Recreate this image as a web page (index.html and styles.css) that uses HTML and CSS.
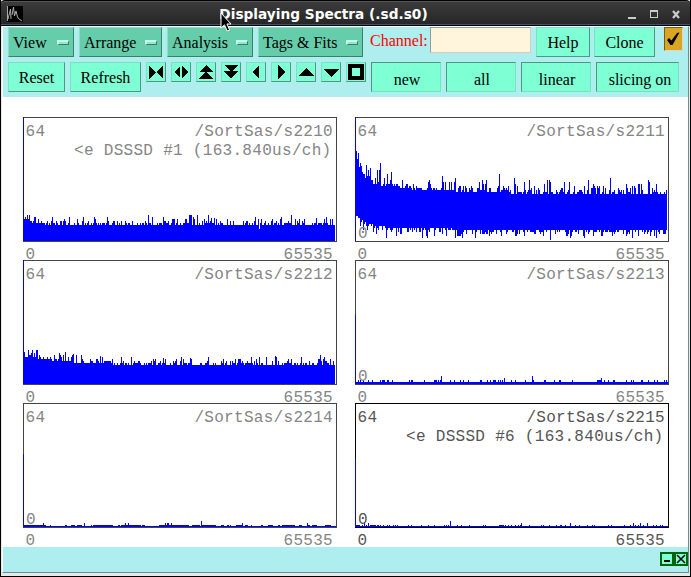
FILE: index.html
```html
<!DOCTYPE html>
<html>
<head>
    <meta charset="utf-8">
    <title>Displaying Spectra (.sd.s0)</title>
    <link rel="stylesheet" href="styles.css">
</head>
<body>
    <div class="window">
        <div class="titlebar">
            <svg class="app-icon" width="16" height="16" viewBox="0 0 16 16">
                <rect width="16" height="16" fill="#000"/>
                <path d="M0.5 0V15M1 13L3.5 3L4 13M5 9L6.5 1L7.5 10L9 5L10.5 11L12 13L15 15" fill="none" stroke="#aaa"/>
            </svg>
            <span class="title">Displaying Spectra (.sd.s0)</span>
            <svg class="win-buttons" width="56" height="12" viewBox="0 0 56 12" shape-rendering="crispEdges">
                <path d="M1 9h8v2H1z" fill="#ccc"/>
                <path d="M23.5 2.5h7v7h-7zM23.5 3.5h7" fill="none" stroke="#ccc"/>
                <path d="M46 3l6 7M52 3l-6 7" stroke="#ccc" stroke-width="2.2" shape-rendering="auto"/>
            </svg>
        </div>

        <div class="content">
            <div class="toolbar">
                <div class="row menus">
                    <div class="menu view">View<i></i></div>
                    <div class="menu arrange">Arrange<i></i></div>
                    <div class="menu analysis">Analysis<i></i></div>
                    <div class="menu tags">Tags &amp; Fits<i></i></div>
                    <label for="channel">Channel:</label>
                    <input type="text" id="channel">
                    <div class="btn help">Help</div>
                    <div class="btn clone">Clone</div>
                    <div class="check">
                        <svg width="16" height="20" viewBox="0 0 16 20"><path d="M2 12L4 10L6.5 12.5L12 5L14.5 4.5L7.5 17H5.5Z" fill="#000"/></svg>
                    </div>
                </div>
                <div class="row actions">
                    <div class="btn reset">Reset</div>
                    <div class="btn refresh">Refresh</div>
                    <div class="icon"><svg viewBox="0 0 18 18"><path d="M2 3l7 6l-7 7zM16 3l-7 6l7 7z"/></svg></div>
                    <div class="icon"><svg viewBox="0 0 18 18"><path d="M8 3v12l-6-6zM10 3v12l6-6z"/></svg></div>
                    <div class="icon"><svg viewBox="0 0 18 18"><path d="M9 2l7 7H2zM9 8l7 8H2z"/></svg></div>
                    <div class="icon"><svg viewBox="0 0 18 18"><path d="M2 2h14l-7 7zM2 8h14l-7 8z"/></svg></div>
                    <div class="icon"><svg viewBox="0 0 18 18"><path d="M12 2v14l-7-7z"/></svg></div>
                    <div class="icon"><svg viewBox="0 0 18 18"><path d="M6 2v14l7-7z"/></svg></div>
                    <div class="icon"><svg viewBox="0 0 18 18"><path d="M9 5l8 8H1z"/></svg></div>
                    <div class="icon"><svg viewBox="0 0 18 18"><path d="M1 6h16l-8 8z"/></svg></div>
                    <div class="icon"><svg viewBox="0 0 18 18"><path fill-rule="evenodd" d="M1 1h16v16H1zM5 5v8h8V5z"/></svg></div>
                    <div class="btn sunken">new</div>
                    <div class="btn sunken">all</div>
                    <div class="btn sunken">linear</div>
                    <div class="btn sunken slicing">slicing on</div>
                </div>
            </div>

            <div class="plots" id="plots">
                <!-- Spectra will be drawn here -->
            </div>

            <div class="footer">
                <div class="mini"><svg width="10" height="10" viewBox="0 0 10 10"><path d="M2 6h6v2H2z"/></svg></div>
                <div class="mini"><svg width="10" height="10" viewBox="0 0 10 10"><path d="M1 1L9 9M9 1L1 9" stroke="#000" stroke-width="1.6"/></svg></div>
            </div>
        </div>

        <svg class="cursor" width="12" height="21" viewBox="0 0 12 21">
            <path d="M1 1V16L4.5 12.8L7.2 19L9.6 18L7 12H11Z" fill="#000" stroke="#fff"/>
        </svg>
    </div>

    <script src="spectra.js"></script>
</body>
</html>
```
FILE: styles.css
```css
body {
    margin: 0;
    background-color: #000;
    font-family: "Liberation Serif", "Times New Roman", serif;
    font-size: 16px;
    color: #000;
}

.window {
    position: relative;
    box-sizing: border-box;
    width: 691px;
    height: 577px;
    overflow: hidden;
    border: 1px solid #000;
    border-top: none;
    background-color: #e8e8e8;
}

.titlebar {
    box-sizing: border-box;
    height: 26px;
    display: flex;
    align-items: center;
    padding: 1px 8px 0 6px;
    margin: 0 -1px;
    border-top: 1px solid #000;
    border-bottom: 1px solid #000;
    border-radius: 5px 5px 0 0;
    box-shadow: inset 0 1px #555, inset 0 -1px #3a5276;
    background: linear-gradient(#3c3c3c, #262626);
    color: #fff;
}

.app-icon {
    margin-left: 1px;
}

.title {
    flex: 1;
    padding-right: 3px;
    text-align: center;
    font: bold 13.7px "DejaVu Sans", sans-serif;
    white-space: nowrap;
}

.content {
    box-sizing: border-box;
    width: 687px;
    height: 547px;
    margin-left: 1px;
    border: 1px solid #fff;
    border-right-color: #699090;
    border-bottom-color: #699090;
    background-color: #afeeee;
}

.toolbar {
    box-sizing: border-box;
    height: 70px;
    padding: 0 0 0 5px;
}

.row {
    display: flex;
    align-items: flex-start;
}

.actions {
    gap: 5px;
    margin-top: 5px;
}

.menu, .btn {
    box-sizing: border-box;
    height: 30px;
    line-height: 29px;
    border: 1px solid;
    white-space: nowrap;
}

.menu {
    display: flex;
    align-items: center;
    justify-content: space-between;
    padding: 0 4px 0 4px;
    margin-right: 5px;
    background-color: #66cdaa;
    border-color: #8ae0c6 #3d8068 #3d8068 #8ae0c6;
}

.menu i {
    box-sizing: border-box;
    width: 12px;
    height: 5px;
    border: 1px solid;
    border-color: #c0ffee #3d7b66 #3d7b66 #c0ffee;
    border-width: 2px 1px 1px 2px;
    background-color: #8ee8cc;
}

.view { width: 66px; }
.arrange { width: 83px; }
.analysis { width: 86px; }
.tags { width: 105px; margin-right: 7px; }

.row label {
    width: 60px;
    line-height: 27px;
    color: #f00;
}

.row input {
    box-sizing: border-box;
    width: 101px;
    height: 26px;
    margin: 0 5px 0 0;
    border: 1px solid;
    border-color: #999 #d8ccb8 #d8ccb8 #999;
    background-color: #fff5dc;
}

.btn {
    text-align: center;
    background-color: #7fffd4;
    border-color: #71e5bd #4c9980 #4c9980 #71e5bd;
}

.help { width: 54px; margin-right: 4px; }
.clone { width: 61px; }
.reset { width: 57px; }
.refresh { width: 71px; }

.sunken {
    width: 70px;
    padding-left: 2px;
    line-height: 33px;
    border-color: #4c9980 #71e5bd #71e5bd #4c9980;
}

.slicing {
    width: 83px;
    padding-left: 5px;
}

.check {
    width: 17px;
    height: 22px;
    margin-left: 9px;
    border: 1px solid;
    border-color: #7d5c12 #e0d4c8 #e0d4c8 #7d5c12;
    background-color: #daa520;
}

.icon {
    box-sizing: border-box;
    width: 20px;
    height: 20px;
    border: 1px solid;
    border-color: #71e5bd #4c9980 #4c9980 #71e5bd;
    background-color: #7fffd4;
}

.icon svg {
    display: block;
    width: 18px;
    height: 18px;
    shape-rendering: crispEdges;
}

.plots {
    box-sizing: border-box;
    height: 450px;
    padding: 20px 0 0 20px;
    display: grid;
    grid-template-columns: 314px 314px;
    grid-auto-rows: 143px;
    column-gap: 18px;
    background-color: #fff;
}

.plot {
    display: block;
    overflow: visible;
    font-family: "Liberation Mono", "Courier New", monospace;
    font-size: 16px;
    letter-spacing: 0.3px;
}

.plot .frame {
    fill: none;
    stroke: #444;
}

.plot .trace {
    fill: #00f;
    shape-rendering: crispEdges;
}

.plot text {
    fill: #858585;
}

.plot .end {
    text-anchor: end;
}

.plot.selected .frame {
    stroke: #000;
}

.plot.selected text {
    fill: #555;
}

.footer {
    height: 25px;
    display: flex;
    justify-content: flex-end;
    box-sizing: border-box;
    padding-top: 5px;
}

.mini {
    width: 10px;
    height: 10px;
    border: 2px solid #00640a;
    background-color: #7fffd4;
}

.mini svg {
    display: block;
}

.cursor {
    position: absolute;
    left: 219px;
    top: 12px;
}
```
FILE: spectra.js
```js
// small repeatable noise generator
function noise(seed) {
    return function() {
        seed = (seed * 16807) % 2147483647;
        return seed / 2147483647;
    };
}

// noisy trace: top(x) and low(x) give the heights of the band in pixels
function band(seed, top, low, spread, peaks) {
    var rnd = noise(seed);
    var cols = [];
    for (var x = 1; x < 312; x++) {
        var r = rnd();
        var h = top(x) + Math.floor(-Math.log(1 - r * 0.97) * spread) * 2;
        var l = low(x) - Math.floor(-Math.log(1 - rnd() * 0.96) * 1.8) * 2;
        cols.push([x, peaks[x] || h, Math.max(1, l)]);
    }
    return cols;
}

// nearly empty trace: a flat line with single counts on it
function ticks(base, h, list, peaks) {
    var cols = [];
    for (var x = 1; x < 313; x++) {
        cols.push([x, peaks[x] || (list.indexOf(x) >= 0 ? h : base), 1]);
    }
    return cols;
}

function dense(seed, density) {
    var rnd = noise(seed);
    var list = [];
    var on = true;
    for (var x = 1; x < 312; x++) {
        if (rnd() < 0.38) on = rnd() < density;
        if (on) list.push(x);
    }
    return list;
}

var flat = function() { return 1; };

var spectra = [
    { name: 's2210', label: '<e DSSSD #1 (163.840us/ch)', edge: 124,
      cols: band(4211, function(x) { return 17 + 2 * Math.round(3 * Math.exp(-x / 12)); }, flat, 1.6,
          { 2: 25, 4: 27, 11: 25, 12: 25, 29: 25, 60: 25, 188: 24, 191: 24, 193: 23, 293: 24, 236: 13 }) },
    { name: 's2211', edge: 124, zero: true,
      cols: band(9173, function(x) { return 2 * Math.round((47 + 11 * Math.exp(-x / 90) + 22 * Math.exp(-x / 9)) / 2); },
          function(x) { return 2 * Math.round((12 + 4 * Math.exp(-x / 70) + 13 * Math.exp(-x / 9)) / 2); }, 2.6,
          { 1: 91, 2: 83, 3: 89, 4: 75, 5: 79, 11: 77, 25: 79, 87: 66, 144: 68, 159: 64, 209: 60, 233: 62, 294: 60 }) },
    { name: 's2212', edge: 124,
      cols: band(7741, function(x) { return 2 * Math.round((19 + 10 * Math.exp(-x / 55)) / 2); }, flat, 1.6,
          { 1: 33, 5: 35, 9: 35, 13: 35, 14: 35, 42: 33, 50: 31, 77: 29, 140: 27, 167: 27, 252: 29 }) },
    { name: 's2213', edge: 69, zero: true,
      cols: ticks(3, 5, [3, 5, 8, 13, 17, 25, 27, 28, 29, 32, 33, 37, 54, 56, 57, 69, 79, 80, 81, 83, 85, 95, 99, 105, 108,
          113, 125, 126, 132, 135, 138, 139, 140, 143, 145, 147, 156, 160, 170, 178, 189, 190, 199, 204, 205, 217,
          242, 243, 244, 245, 249, 253, 258, 259, 271, 276, 278, 286, 287, 293, 299, 302, 309, 311],
          { 86: 9, 177: 9, 149: 7, 246: 7 }) },
    { name: 's2214', edge: 73, zero: true,
      cols: ticks(2, 3, dense(517, 0.6),
          { 20: 5, 61: 5, 102: 5, 105: 5, 142: 5, 144: 5, 145: 5, 148: 5, 178: 7, 219: 5, 284: 5 }) },
    { name: 's2215', label: '<e DSSSD #6 (163.840us/ch)', edge: 69, zero: true, selected: true,
      cols: ticks(2, 3, [1, 2, 3, 4, 7, 11, 15, 16, 17, 18, 19, 20, 22, 23, 25, 28, 32, 34, 38, 40, 42, 53, 56, 66, 73, 79, 89,
          91, 93, 102, 106, 114, 128, 130, 144, 145, 146, 147, 148, 150, 153, 156, 160, 163, 165, 174, 186, 188, 194,
          201, 205, 206, 210, 220, 224, 232, 237, 239, 253, 256, 269, 275, 280, 283, 288, 298, 301, 305, 307],
          { 9: 5, 13: 5, 166: 5, 215: 5, 278: 5, 285: 5, 292: 5, 95: 7 }) }
];

function drawPlot(s) {
    var d = 'M0 ' + (124 - s.edge) + 'h1v' + s.edge + 'h-1z';
    s.cols.forEach(function(c) {
        d += 'M' + c[0] + ' ' + (124 - c[1] + 1) + 'h1V' + (125 - c[2]) + 'h-1z';
    });
    var label = s.label ? '<text class="end" x="308.5" y="38">' + s.label.replace('<', '&lt;') + '</text>' : '';
    var zero = s.zero ? '<text x="3" y="121">0</text>' : '';
    return `
        <svg class="plot ${s.selected ? 'selected' : ''}" width="314" height="143" viewBox="0 0 314 143">
            <rect class="frame" x="0.5" y="0.5" width="313" height="124"/>
            <path class="trace" d="${d}"/>
            <text x="2.6" y="19">64</text>
            <text class="end" x="310" y="19">/SortSas/${s.name}</text>
            ${label}
            ${zero}
            <text x="2.6" y="142">0</text>
            <text class="end" x="310" y="142">65535</text>
        </svg>`;
}

document.getElementById('plots').innerHTML = spectra.map(drawPlot).join('');
```
